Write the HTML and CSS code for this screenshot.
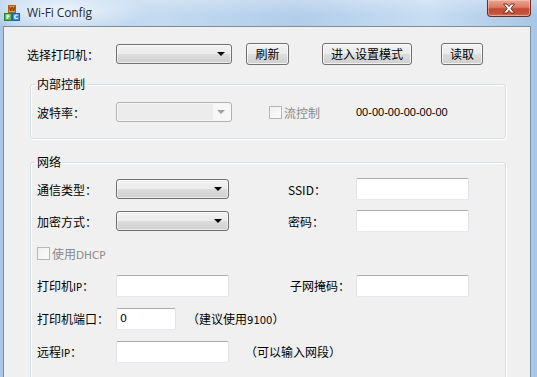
FILE: index.html
```html
<!DOCTYPE html>
<html>
<head>
<meta charset="utf-8">
<link rel="stylesheet" href="styles.css">
</head>
<body>
<div class="window">
  <div class="titlebar">
    <svg class="appicon" width="16" height="16" viewBox="0 0 16 16">
      <rect x="4.5" y="0.5" width="7" height="7" fill="#f29a2e" stroke="#b5601a"/>
      <text x="8" y="6.3" font-size="6" font-family="DejaVu Sans" font-weight="bold" fill="#7a2d00" text-anchor="middle">W</text>
      <rect x="0.5" y="8.5" width="7" height="7" fill="#5dbb4a" stroke="#2f7d22"/>
      <text x="4" y="14.3" font-size="6" font-family="DejaVu Sans" font-weight="bold" fill="#fff" text-anchor="middle">F</text>
      <rect x="8.5" y="8.5" width="7" height="7" fill="#3d8fe0" stroke="#1f5fa8"/>
      <text x="12" y="14.3" font-size="6" font-family="DejaVu Sans" font-weight="bold" fill="#fff" text-anchor="middle">C</text>
    </svg>
    <span class="title">Wi-Fi Config</span>
    <div class="close">
      <svg width="14" height="11" viewBox="0 0 14 11">
        <path d="M1.5 1 L5 1 L7 3.6 L9 1 L12.5 1 L8.8 5.5 L12.5 10 L9 10 L7 7.4 L5 10 L1.5 10 L5.2 5.5 Z" fill="#fff" stroke="#6b2216" stroke-width="0.9" stroke-linejoin="round"/>
      </svg>
    </div>
  </div>
  <div class="client">
    <div class="toprow">
      <span class="lbl w89">选择打印机：</span>
      <div class="combo w116"><span class="arrow"></span></div>
      <button class="btn btn-refresh">刷新</button>
      <button class="btn btn-setup">进入设置模式</button>
      <button class="btn btn-read">读取</button>
    </div>

    <fieldset class="group g-internal">
      <legend>内部控制</legend>
      <div class="row r-baud">
        <span class="lbl w79">波特率：</span>
        <div class="combo combo-disabled w116"><span class="face"></span><span class="arrow arrow-dis"></span></div>
        <div class="check-wrap w87">
          <span class="check"></span><span class="dis">流控制</span>
        </div>
        <span class="mac">00-00-00-00-00-00</span>
      </div>
    </fieldset>

    <fieldset class="group g-net">
      <legend>网络</legend>
      <div class="row r32">
        <span class="lbl w79">通信类型：</span>
        <div class="combo w113"><span class="arrow"></span></div>
        <span class="lbl lbl-right">SSID：</span>
        <div class="tb w113"></div>
      </div>
      <div class="row r32">
        <span class="lbl w79">加密方式：</span>
        <div class="combo w113"><span class="arrow"></span></div>
        <span class="lbl lbl-right">密码：</span>
        <div class="tb w113"></div>
      </div>
      <div class="row r32">
        <span class="check"></span><span class="dis dhcp">使用<span class="lat">DHCP</span></span>
      </div>
      <div class="row r33">
        <span class="lbl w79">打印机<span class="sm">IP</span>：</span>
        <div class="tb w113"></div>
        <span class="lbl lbl-right mask">子网掩码：</span>
        <div class="tb w113"></div>
      </div>
      <div class="row r33">
        <span class="lbl w79">打印机端口：</span>
        <div class="tb w60"><span class="val">0</span></div>
        <span class="note note-port">（建议使用<span class="sm">9100</span>）</span>
      </div>
      <div class="row r33">
        <span class="lbl w79">远程<span class="sm">IP</span>：</span>
        <div class="tb w113"></div>
        <span class="note note-remote">（可以输入网段）</span>
      </div>
    </fieldset>
  </div>
</div>
</body>
</html>
```

FILE: styles.css
```css
html, body {
  margin: 0;
  padding: 0;
}
body {
  width: 537px;
  height: 377px;
  overflow: hidden;
  font-family: "Noto Sans CJK SC", "DejaVu Sans", sans-serif;
  font-size: 12px;
  color: #000;
}
.window {
  width: 537px;
  height: 377px;
  background: linear-gradient(to right, #a9c6e6 0%, #b9d3ee 3%, #c3daf0 30%, #b2cdea 55%, #c7ddf2 80%, #a9c6e6 100%);
  display: flex;
  flex-direction: column;
  overflow: hidden;
}
.titlebar {
  height: 26px;
  flex: none;
  display: flex;
  align-items: flex-start;
  background:
    radial-gradient(ellipse 90px 20px at 60px 12px, rgba(255,255,255,0.75), rgba(255,255,255,0) 100%),
    linear-gradient(to bottom, rgba(255,255,255,0.25), rgba(255,255,255,0) 60%);
}
.appicon {
  margin: 5px 0 0 4px;
  flex: none;
}
.title {
  margin: 4px 0 0 7px;
  font-family: "Open Sans", "DejaVu Sans", sans-serif;
  font-size: 12px;
  color: #1e2b3a;
  letter-spacing: -0.1px;
}
.close {
  margin-left: auto;
  margin-right: 6px;
  width: 44px;
  height: 17px;
  box-sizing: border-box;
  border: 1px solid #6e2a1e;
  border-top: none;
  border-radius: 0 0 4px 4px;
  background: linear-gradient(to bottom, #e9a793 0%, #dc7b63 45%, #c54a33 55%, #c5523a 85%, #dc7a5e 100%);
  box-shadow: inset 0 0 0 1px rgba(255,220,210,0.45);
  display: flex;
  align-items: center;
  justify-content: center;
}
.client {
  flex: 1;
  margin: 0 6px 0 3px;
  border: 1px solid #7b8da3;
  border-bottom: none;
  background: #f0f0f0;
}
.toprow {
  display: flex;
  align-items: center;
  height: 22px;
  margin-top: 16px;
  padding-left: 23px;
}
.lbl {
  flex: none;
  white-space: nowrap;
}
.w89 { width: 89px; }
.w79 { width: 79px; }
.w116 { width: 116px; }
.w113 { width: 113px; }
.w87 { width: 87px; }
.w60 { width: 60px; }

.combo {
  flex: none;
  height: 20px;
  box-sizing: border-box;
  border: 1px solid #707070;
  border-radius: 3px;
  background: linear-gradient(to bottom, #f2f2f2 0%, #ebebeb 50%, #dddddd 51%, #cfcfcf 100%);
  box-shadow: inset 0 0 0 1px rgba(255,255,255,0.6);
  position: relative;
}
.arrow {
  position: absolute;
  right: 6px;
  top: 7px;
  width: 0;
  height: 0;
  border-left: 4px solid transparent;
  border-right: 4px solid transparent;
  border-top: 4px solid #000;
}
.combo-disabled {
  border-color: #adb2b5;
  background: #f7f7f7;
  box-shadow: none;
}
.combo-disabled .face {
  position: absolute;
  left: 1px;
  top: 1px;
  bottom: 1px;
  right: 18px;
  background: #ececec;
}
.arrow-dis {
  border-top-color: #a0a0a0;
}
.btn {
  flex: none;
  height: 22px;
  box-sizing: border-box;
  padding: 0;
  font-family: "Noto Sans CJK SC", sans-serif;
  font-size: 12px;
  line-height: 18px;
  color: #000;
  border: 1px solid #707070;
  border-radius: 3px;
  background: linear-gradient(to bottom, #f2f2f2 0%, #ebebeb 50%, #dddddd 51%, #cfcfcf 100%);
  box-shadow: inset 0 0 0 1px rgba(255,255,255,0.7);
}
.btn-refresh { margin-left: 14px; width: 43px; }
.btn-setup { margin-left: 33px; width: 90px; }
.btn-read { margin-left: 29px; width: 42px; }

.group {
  margin: 0 0 0 26px;
  width: 476px;
  box-sizing: border-box;
  padding: 0;
  border: 1px solid #d5dfe5;
  border-radius: 3px;
  box-shadow: inset 1px 1px 0 #fff, 1px 1px 0 #fff;
  min-inline-size: 0;
}
.group legend {
  margin-left: 4px;
  padding: 0 2px;
  line-height: 14px;
  font-size: 12px;
}
.g-internal {
  margin-top: 12px;
  padding: 10px 0 15px 0;
}
.g-net {
  margin-top: 16px;
  padding: 4px 0 30px 0;
}
.row {
  display: flex;
  align-items: center;
  padding-left: 6px;
}
.r-baud { height: 22px; }
.r32 { height: 32px; }
.r33 { height: 33px; }
.check-wrap {
  flex: none;
  margin-left: 37px;
  display: flex;
  align-items: center;
}
.check {
  flex: none;
  width: 13px;
  height: 13px;
  box-sizing: border-box;
  border: 1px solid #b6b6b6;
  background: linear-gradient(to bottom right, #f0f0f0, #fbfbfb);
  margin-right: 2px;
}
.dis {
  color: #8a8a8a;
}
.lat {
  font-family: "DejaVu Sans", sans-serif;
  font-size: 10.5px;
}
.sm {
  font-family: "DejaVu Sans", sans-serif;
  font-size: 10px;
}
.mac {
  font-family: "Liberation Sans", sans-serif;
  font-size: 11px;
}
.lbl-right {
  margin-left: 59px;
  width: 68px;
}
.mask {
  padding-left: 2px;
  width: 66px;
}
.tb {
  flex: none;
  height: 22px;
  box-sizing: border-box;
  background: #fff;
  border: 1px solid #e2e3ea;
  border-top-color: #abadb3;
  border-bottom-color: #e3e9ef;
  border-radius: 2px;
  display: flex;
  align-items: center;
}
.val {
  padding-left: 3px;
  font-family: "DejaVu Sans", sans-serif;
  font-size: 11px;
}
.note-port { margin-left: 11px; }
.note-remote { margin-left: 16px; }
```
